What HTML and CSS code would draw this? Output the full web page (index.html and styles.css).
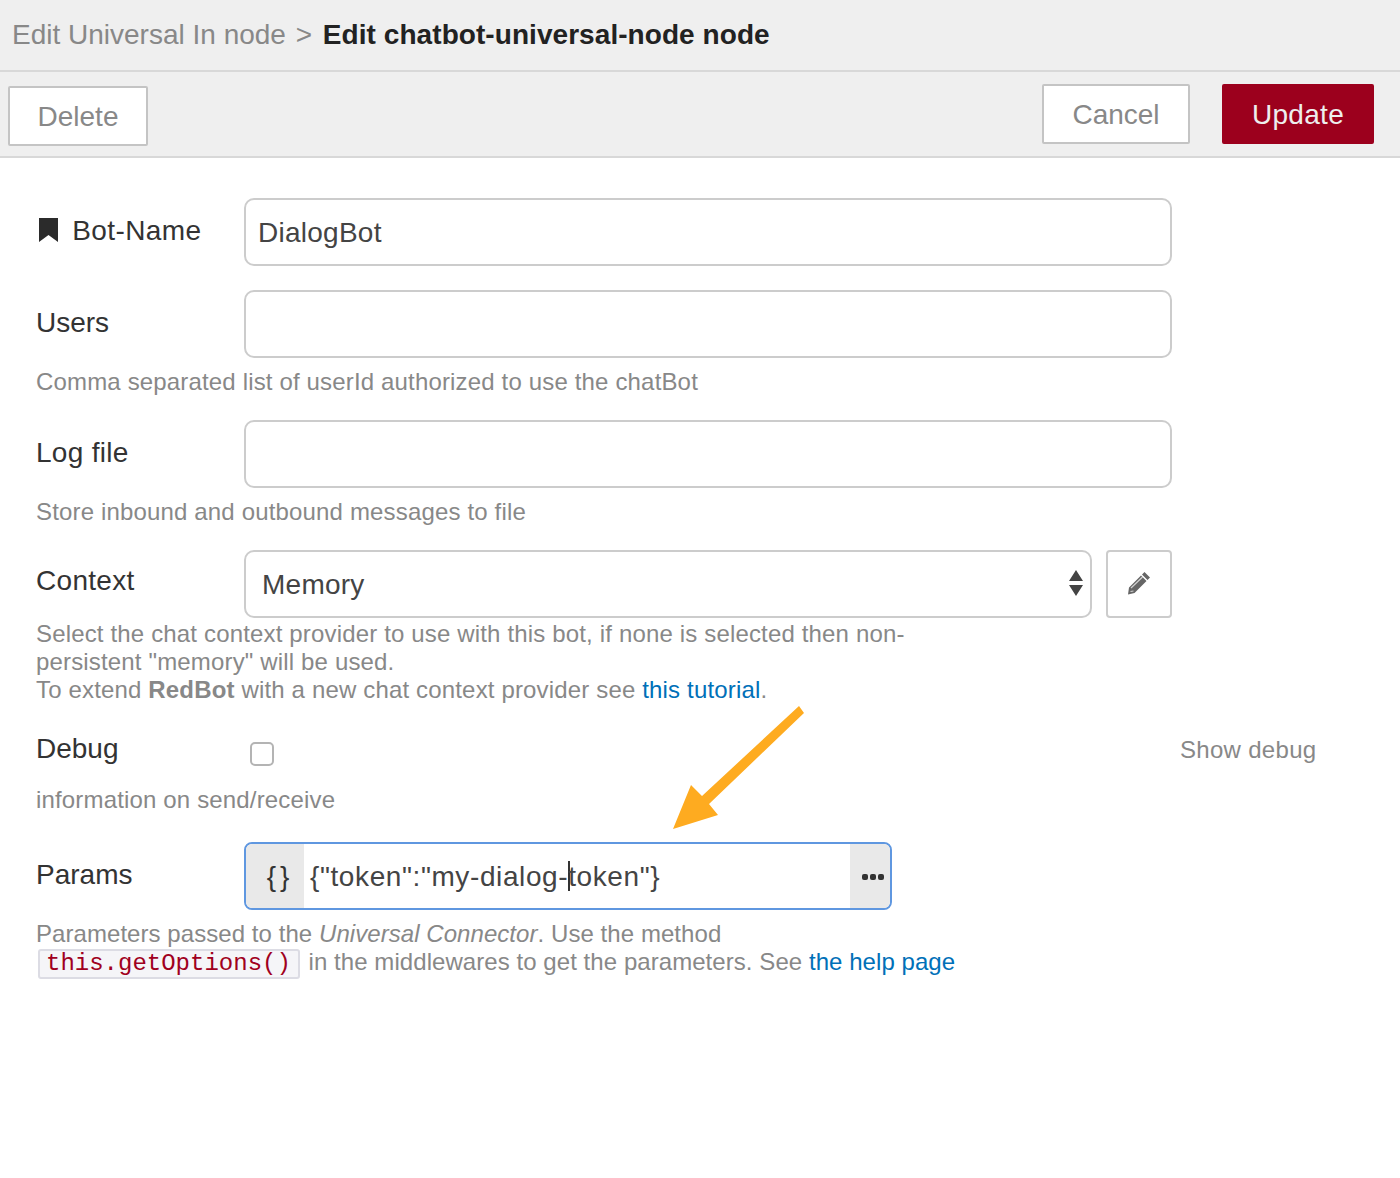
FILE: index.html
```html
<!DOCTYPE html>
<html>
<head>
    <title>Edit chatbot-universal-node node</title>
    <link rel="stylesheet" href="styles.css">
</head>
<body>
    <div class="tray-title">
        <span class="crumb">Edit Universal In node</span>
        <span class="crumb-sep">&gt;</span>
        <span class="crumb-current">Edit chatbot-universal-node node</span>
    </div>

    <div class="toolbar">
        <button type="button" class="btn btn-delete">Delete</button>
        <div class="toolbar-right">
            <button type="button" class="btn btn-cancel">Cancel</button>
            <button type="button" class="btn btn-primary">Update</button>
        </div>
    </div>

    <form class="node-form">
        <div class="form-row row-name">
            <label class="field-label" for="bot-name">
                <svg class="bookmark" width="19" height="24" viewBox="0 0 19 24"><path d="M0 0H19V24L9.500 17L0 24Z"/></svg>
                Bot-Name
            </label>
            <input class="text-input" id="bot-name" type="text" value="DialogBot">
        </div>

        <div class="form-row row-users">
            <label class="field-label" for="users">Users</label>
            <input class="text-input" id="users" type="text">
        </div>
        <div class="tip tip-users">Comma separated list of userId authorized to use the chatBot</div>

        <div class="form-row row-log">
            <label class="field-label" for="log-file">Log file</label>
            <input class="text-input" id="log-file" type="text">
        </div>
        <div class="tip tip-log">Store inbound and outbound messages to file</div>

        <div class="form-row row-context">
            <label class="field-label" for="context">Context</label>
            <div class="select-wrap">
                <select class="select-input" id="context"><option>Memory</option></select>
                <svg class="select-arrows" width="14" height="26" viewBox="0 0 14 26"><path d="M7 0L14 11H0ZM0 15H14L7 26Z"/></svg>
            </div>
            <button type="button" class="edit-btn">
                <svg width="24" height="24" viewBox="0 0 24 24">
                    <path d="M17.500 1L23 6.500L20.500 9L15 3.500ZM14 4.500L19.500 10L7.500 22L1 23.500L2 16.500Z"/>
                    <path class="pencil-shine" d="M4 17L15.500 6M3.500 20.500L6.500 20"/>
                </svg>
            </button>
        </div>
        <div class="tip tip-context">
            Select the chat context provider to use with this bot, if none is selected then non-<br>
            persistent "memory" will be used.<br>
            To extend <b>RedBot</b> with a new chat context provider see <a href="#">this tutorial</a>.
        </div>

        <div class="form-row row-debug">
            <label class="field-label" for="debug">Debug</label>
            <div class="debug-check"><input class="checkbox" id="debug" type="checkbox"></div>
            <span class="tip debug-text">Show debug</span>
        </div>
        <div class="tip tip-debug">information on send/receive</div>

        <div class="form-row row-params">
            <label class="field-label">Params</label>
            <div class="typed-input">
                <span class="typed-type">{ }</span>
                <span class="typed-value">{"token":"my-dialog-<i class="caret"></i>token"}</span>
                <span class="typed-more"><i></i><i></i><i></i></span>
            </div>
        </div>
        <div class="tip tip-params">
            Parameters passed to the <em>Universal Connector</em>. Use the method<br>
            <code>this.getOptions()</code> in the middlewares to get the parameters. See <a href="#">the help page</a>
        </div>
    </form>

    <svg class="arrow" width="150" height="130" viewBox="665 705 150 130"><path d="M673 829L691 785L702 796L799 706L804 713L709 804L718 815Z"/></svg>
</body>
</html>
```

FILE: styles.css
```css
html, body {
    height: 1178px;
    overflow: hidden;
}

body {
    font-family: "Liberation Sans", Arial, sans-serif;
    font-size: 28px;
    color: #333;
    background-color: #fff;
    margin: 0;
    padding: 0;
    position: relative;
}

.tray-title {
    height: 70px;
    line-height: 70px;
    padding-left: 12px;
    background-color: #efefef;
    border-bottom: 2px solid #d8d8d8;
    white-space: nowrap;
}

.crumb, .crumb-sep {
    color: #888;
}

.crumb-sep {
    margin: 0 3px 0 2px;
}

.crumb-current {
    font-weight: bold;
    color: #222;
    letter-spacing: 0.06px;
}

.toolbar {
    height: 84px;
    padding: 0 26px 0 8px;
    background-color: #efefef;
    border-bottom: 2px solid #d8d8d8;
    display: flex;
    align-items: center;
    justify-content: space-between;
}

.toolbar-right {
    display: flex;
    align-items: center;
    gap: 32px;
}

.btn {
    font-family: inherit;
    font-size: 28px;
    color: #888;
    height: 60px;
    padding: 2px 28px 0;
    background-color: #fff;
    border: 2px solid #c4c4c4;
    border-radius: 2px;
}

.btn-delete {
    width: 140px;
    padding: 2px 0 0;
    margin-top: 4px;
}

.btn-cancel {
    width: 148px;
    padding: 2px 0 0;
}

.btn-primary {
    width: 152px;
    padding: 2px 0 0;
    color: #eee;
    background-color: #9c001d;
    border-color: #9c001d;
    letter-spacing: 0.3px;
}

.node-form {
    padding: 40px 0 0 36px;
    width: 1136px;
}

.form-row {
    display: flex;
    align-items: flex-start;
}

.field-label {
    width: 208px;
    flex-shrink: 0;
    line-height: 66px;
    white-space: nowrap;
}

.row-name .field-label {
    letter-spacing: 0.4px;
    line-height: 65px;
}

.row-log .field-label, .row-context .field-label {
    letter-spacing: 0.3px;
}

.row-context .field-label {
    line-height: 62px;
}

.row-debug .field-label {
    line-height: 62px;
}

.row-params .field-label {
    line-height: 66px;
}

.bookmark {
    fill: #2b2b2b;
    margin: 0 6px 0 3px;
    vertical-align: -2px;
}

.text-input, .select-input {
    font-family: inherit;
    font-size: 28px;
    color: #444;
    height: 68px;
    box-sizing: border-box;
    border: 2px solid #ccc;
    border-radius: 10px;
    background-color: #fff;
    outline: none;
    letter-spacing: 0.25px;
}

.text-input {
    width: 928px;
    padding: 2px 12px 0;
}

.row-users {
    margin-top: 24px;
}

.row-log {
    margin-top: 24px;
}

.row-context {
    margin-top: 24px;
}

.select-wrap {
    position: relative;
    width: 848px;
}

.select-input {
    width: 100%;
    padding: 0 16px;
    appearance: none;
    -webkit-appearance: none;
}

.select-arrows {
    position: absolute;
    right: 9px;
    top: 20px;
    fill: #444;
}

.edit-btn {
    width: 66px;
    height: 68px;
    margin-left: 14px;
    padding: 0 0 2px;
    background-color: #fff;
    border: 2px solid #ccc;
    border-radius: 4px;
    display: flex;
    align-items: center;
    justify-content: center;
}

.edit-btn svg {
    fill: #666;
}

.pencil-shine {
    fill: none;
    stroke: #fff;
    stroke-width: 1.2;
    opacity: 0.7;
}

.tip {
    font-size: 24px;
    line-height: 28px;
    color: #888;
    letter-spacing: 0.16px;
}

.tip a {
    color: #0070b8;
    text-decoration: none;
}

.tip-users {
    margin-top: 10px;
}

.tip-log {
    margin-top: 10px;
}

.tip-context {
    margin-top: 2px;
}

.row-debug {
    margin-top: 14px;
    height: 56px;
}

.debug-check {
    width: 928px;
    flex-shrink: 0;
    height: 56px;
}

.checkbox {
    appearance: none;
    -webkit-appearance: none;
    width: 24px;
    height: 24px;
    margin: 24px 0 0 6px;
    border: 2px solid #b4b4b4;
    border-radius: 5px;
    background-color: #fff;
    box-sizing: border-box;
    display: block;
}

.debug-text {
    margin: 18px 0 0 8px;
    white-space: nowrap;
    letter-spacing: 0.3px;
}

.tip-debug {
    margin-top: 12px;
}

.row-params {
    margin-top: 28px;
}

.typed-input {
    width: 648px;
    height: 68px;
    box-sizing: border-box;
    border: 2px solid #5f97e0;
    border-radius: 8px;
    overflow: hidden;
    display: flex;
    align-items: stretch;
    line-height: 66px;
}

.typed-type {
    width: 58px;
    box-sizing: border-box;
    padding-left: 6px;
    flex-shrink: 0;
    text-align: center;
    white-space: nowrap;
    word-spacing: -4px;
    background-color: #e9e9e9;
}

.typed-value {
    flex: 1;
    padding-left: 6px;
    color: #444;
    white-space: nowrap;
    letter-spacing: 0.6px;
}

.caret {
    display: inline-block;
    width: 0;
    height: 30px;
    margin-right: -2px;
    border-left: 2px solid #333;
    vertical-align: -5px;
}

.typed-more {
    width: 40px;
    box-sizing: border-box;
    padding: 2px 0 0 6px;
    flex-shrink: 0;
    background-color: #e9e9e9;
    display: flex;
    align-items: center;
    justify-content: center;
    gap: 2px;
}

.typed-more i {
    width: 6px;
    height: 6px;
    border-radius: 2px;
    background-color: #333;
}

.tip-params {
    margin-top: 10px;
    letter-spacing: 0.06px;
}

code {
    font-family: "Liberation Mono", monospace;
    font-size: 24px;
    line-height: 26px;
    display: inline-block;
    color: #a00020;
    background-color: #f5f5f8;
    border: 2px solid #dcdce4;
    border-radius: 3px;
    padding: 0 7px 0 6px;
    margin: 0 2px 0 2px;
    letter-spacing: 0;
}

.arrow {
    position: absolute;
    left: 665px;
    top: 705px;
    fill: #feab20;
}
```
